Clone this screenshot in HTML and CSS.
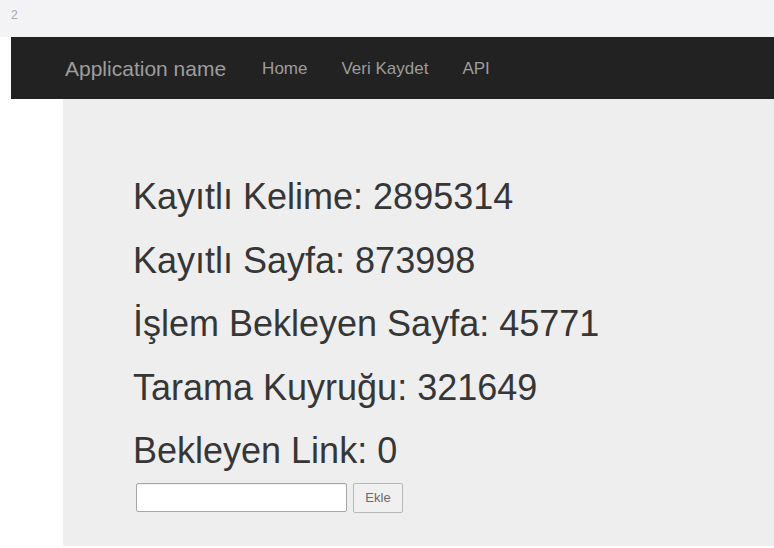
FILE: index.html
```html
<!DOCTYPE html>
<html lang="tr">
<head>
<meta charset="utf-8">
<title>Application name</title>
<link rel="stylesheet" href="styles.css">
</head>
<body>
  <div class="tabstrip"><span class="tab-num">2</span></div>
  <div class="frame">
    <nav class="navbar">
      <a class="brand" href="#">Application name</a>
      <ul class="nav-links">
        <li><a href="#">Home</a></li>
        <li><a href="#">Veri Kaydet</a></li>
        <li><a href="#">API</a></li>
      </ul>
    </nav>
    <div class="body-row">
      <main class="jumbotron">
        <p class="stat">Kayıtlı Kelime: 2895314</p>
        <p class="stat">Kayıtlı Sayfa: 873998</p>
        <p class="stat">İşlem Bekleyen Sayfa: 45771</p>
        <p class="stat">Tarama Kuyruğu: 321649</p>
        <p class="stat">Bekleyen Link: 0</p>
        <form class="add-form">
          <input class="link-input" type="text">
          <button class="add-btn" type="button">Ekle</button>
        </form>
      </main>
    </div>
  </div>
</body>
</html>
```

FILE: styles.css
```css
* {
  box-sizing: border-box;
}

html, body {
  margin: 0;
  padding: 0;
  background: #ffffff;
  font-family: "Liberation Sans", Arial, sans-serif;
  height: 548px;
  overflow: hidden;
}

.tabstrip {
  height: 37px;
  background: #f3f3f5;
  padding: 8px 0 0 11px;
}

.tab-num {
  display: block;
  font-size: 12px;
  line-height: 14px;
  color: #a9a9ae;
}

.frame {
  padding-left: 11px;
}

.navbar {
  height: 62px;
  background: #222222;
  display: flex;
  align-items: center;
  padding-left: 54px;
}

.brand {
  font-size: 21px;
  line-height: 21px;
  color: #9d9d9d;
  text-decoration: none;
  margin-right: 36px;
}

.nav-links {
  display: flex;
  gap: 34px;
  list-style: none;
  margin: 0;
  padding: 2px 0 0 0;
}

.nav-links a {
  font-size: 17px;
  line-height: 17px;
  color: #9d9d9d;
  text-decoration: none;
}

.body-row {
  padding-left: 52px;
}

.jumbotron {
  background: #eeeeee;
  height: 447px;
  padding: 66px 0 0 70px;
  color: #363636;
}

.stat {
  margin: 0;
  font-size: 36px;
  line-height: 63.5px;
  white-space: nowrap;
}

.add-form {
  display: flex;
  align-items: center;
  gap: 6px;
  margin: 0 0 0 3px;
}

.link-input {
  width: 211px;
  height: 29px;
  border: 1px solid #a8a8a8;
  border-radius: 2px;
  background: #ffffff;
  box-shadow: inset 0 1px 1px rgba(0, 0, 0, 0.08);
  padding: 2px 4px;
  font: inherit;
  font-size: 13px;
}

.add-btn {
  width: 50px;
  height: 30px;
  border: 1px solid #b8b8b8;
  border-radius: 2px;
  background: #f0f0f0;
  color: #6a6a6a;
  font-family: "Liberation Sans", Arial, sans-serif;
  font-size: 13px;
  padding: 0;
}
```
